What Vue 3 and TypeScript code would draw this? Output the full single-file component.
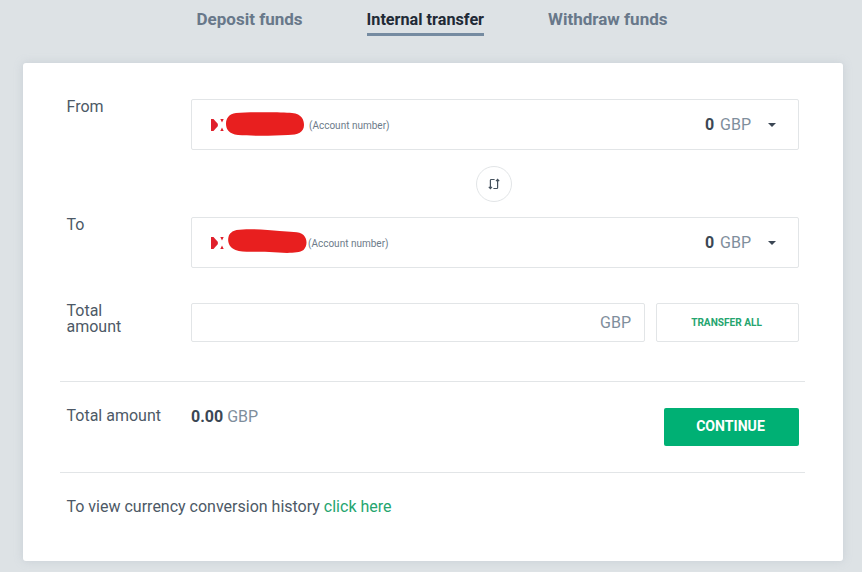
<script setup lang="ts">
const tabs = [
  { label: 'Deposit funds', active: false },
  { label: 'Internal transfer', active: true },
  { label: 'Withdraw funds', active: false },
]
</script>

<template>
  <div class="page">
    <nav class="tabs">
      <span v-for="t in tabs" :key="t.label" class="tab" :class="{ active: t.active }">{{ t.label }}</span>
    </nav>
    <main class="card">
      <section class="form">
        <div class="row from">
          <label class="label">From</label>
          <div class="select">
            <svg class="logo" width="14" height="16" viewBox="0 0 14 16">
              <path d="M0 2 L2.5 2 L6.5 6.5 Q7.5 8 6.5 9.5 L2.5 14 L0 14 Z" fill="#e0202c" />
              <path d="M9.3 2 L12.7 2 L11 5.5 Z M9.3 14 L12.7 14 L11 10.5 Z" fill="#e0202c" />
            </svg>
            <svg class="blot first" width="78" height="24" viewBox="0 0 78 24">
              <path d="M10 1 C25 0 55 0 66 1 C76 2 78 8 78 13 C78 20 72 23 62 23 C45 24 25 24 12 23 C3 22 0 17 0 12 C0 6 3 2 10 1 Z" fill="#e81f1f" />
            </svg>
            <span class="acct first">(Account number)</span>
            <span class="balance"><b>0</b> GBP</span>
            <span class="caret"></span>
          </div>
        </div>
        <div class="swap-row">
          <button class="swap" type="button" aria-label="Swap">
            <svg width="14" height="14" viewBox="0 0 14 14" fill="none" stroke="#46525e" stroke-width="1.2">
              <path d="M7.6 2.5H4.2Q3.4 2.5 3.4 3.3V11.5M1.8 9.8L3.4 11.5l1.6-1.7" />
              <path d="M6.4 11.5H9.8Q10.6 11.5 10.6 10.7V2.5M9 4.2L10.6 2.5l1.6 1.7" />
            </svg>
          </button>
        </div>
        <div class="row to">
          <label class="label">To</label>
          <div class="select">
            <svg class="logo" width="14" height="16" viewBox="0 0 14 16">
              <path d="M0 2 L2.5 2 L6.5 6.5 Q7.5 8 6.5 9.5 L2.5 14 L0 14 Z" fill="#e0202c" />
              <path d="M9.3 2 L12.7 2 L11 5.5 Z M9.3 14 L12.7 14 L11 10.5 Z" fill="#e0202c" />
            </svg>
            <svg class="blot second" width="81" height="25" viewBox="0 0 80 25">
              <path d="M9 1 C22 -1 40 1 52 2 C62 3 72 2 76 6 C80 10 80 17 76 21 C70 25 55 24 42 23 C30 22 16 24 8 21 C1 18 0 12 1 8 C2 4 5 2 9 1 Z" fill="#e81f1f" />
            </svg>
            <span class="acct">(Account number)</span>
            <span class="balance"><b>0</b> GBP</span>
            <span class="caret"></span>
          </div>
        </div>
        <div class="row amount">
          <label class="label two">Total<br />amount</label>
          <div class="amount-input">GBP</div>
          <button class="transfer" type="button">TRANSFER ALL</button>
        </div>
      </section>
      <section class="summary">
        <span class="label">Total amount</span>
        <span class="sum"><b>0.00</b> GBP</span>
        <button class="continue" type="button">CONTINUE</button>
      </section>
      <section class="history">To view currency conversion history <a class="link">click here</a></section>
    </main>
  </div>
</template>

<style>
html, body { margin: 0; background: #dde2e5; }
</style>

<style scoped>
.page {
  width: 862px;
  height: 572px;
  overflow: hidden;
  background: #dde2e5;
  font-family: Roboto, "Liberation Sans", sans-serif;
  color: #46525e;
  box-sizing: border-box;
}
.tabs {
  height: 63px;
  display: flex;
  justify-content: center;
  gap: 64px;
  box-sizing: border-box;
  padding-left: 2px;
}
.tab {
  font-size: 17px;
  font-weight: 700;
  color: #68788a;
  height: 36px;
  line-height: 39px;
  box-sizing: border-box;
}
.tab.active {
  font-size: 16.2px;
  line-height: 40px;
  color: #1f2a36;
  border-bottom: 3px solid #758ba1;
}
.card {
  margin: 0 19px 0 23px;
  height: 498px;
  background: #fff;
  border-radius: 3px;
  box-shadow: 0 0 8px rgba(160, 172, 182, 0.35);
  display: flex;
  flex-direction: column;
}
.form {
  height: 319px;
  box-sizing: border-box;
  margin: 0 38px 0 37px;
  padding: 36px 6px 0 7px;
  border-bottom: 1px solid #e2e5e7;
  display: flex;
  flex-direction: column;
}
.row {
  display: flex;
  align-items: flex-start;
}
.label {
  width: 124.5px;
  margin-left: -0.5px;
  flex: none;
  font-size: 16px;
  line-height: 16px;
  color: #4d5966;
}
.select {
  width: 608px;
  height: 51px;
  box-sizing: border-box;
  border: 1px solid #e2e5e7;
  border-radius: 2px;
  display: flex;
  align-items: center;
  padding: 0 22px 0 19px;
}
.logo { flex: none; }
.blot { flex: none; margin-left: 1px; margin-top: -2px; }
.blot.second { margin-left: 2px; }
.acct {
  font-size: 10px;
  color: #6d7b89;
  margin-top: 2px;
}
.acct.first { margin-left: 5px; }
.balance {
  margin-left: auto;
  font-size: 16px;
  color: #7f8e9c;
}
.balance b {
  color: #3b4754;
  font-weight: 700;
  margin-right: 2px;
}
.caret {
  margin-left: 17px;
  width: 0;
  height: 0;
  border-left: 4px solid transparent;
  border-right: 4px solid transparent;
  border-top: 4px solid #3b4754;
}
.swap-row {
  height: 67px;
  display: flex;
  align-items: center;
  justify-content: center;
  padding-left: 122px;
}
.swap {
  width: 36px;
  height: 36px;
  padding: 0;
  border: 1px solid #e2e5e7;
  border-radius: 50%;
  background: #fff;
  display: flex;
  align-items: center;
  justify-content: center;
}
.amount {
  margin-top: 35px;
}
.amount-input {
  width: 454px;
  height: 39px;
  box-sizing: border-box;
  border: 1px solid #e2e5e7;
  border-radius: 2px;
  text-align: right;
  padding-right: 13px;
  font-size: 16px;
  line-height: 37px;
  color: #7f8e9c;
}
.transfer {
  margin-left: 11px;
  width: 143px;
  height: 39px;
  border: 1px solid #e2e5e7;
  border-radius: 2px;
  background: #fff;
  color: #25a56f;
  font-family: inherit;
  font-size: 10.1px;
  font-weight: 700;
  padding: 0 2px 0 0;
}
.summary {
  height: 91px;
  box-sizing: border-box;
  margin: 0 38px 0 37px;
  padding: 0 6px 0 7px;
  border-bottom: 1px solid #e2e5e7;
  display: flex;
  align-items: flex-start;
}
.summary .label { padding-top: 26px; }
.sum {
  font-size: 16px;
  color: #7f8e9c;
  padding-top: 25px;
}
.sum b { color: #3b4754; font-weight: 700; }
.continue {
  margin-left: auto;
  margin-top: 26px;
  width: 135px;
  height: 38px;
  border: 0;
  border-radius: 2px;
  background: #00b074;
  color: #fff;
  font-family: inherit;
  font-size: 14.1px;
  font-weight: 700;
  padding: 0 2px 2px 0;
}
.history {
  margin: 0 44px;
  padding-top: 24px;
  font-size: 16px;
  color: #4d5966;
  text-indent: -0.5px;
}
.link { color: #25a56f; }
</style>
